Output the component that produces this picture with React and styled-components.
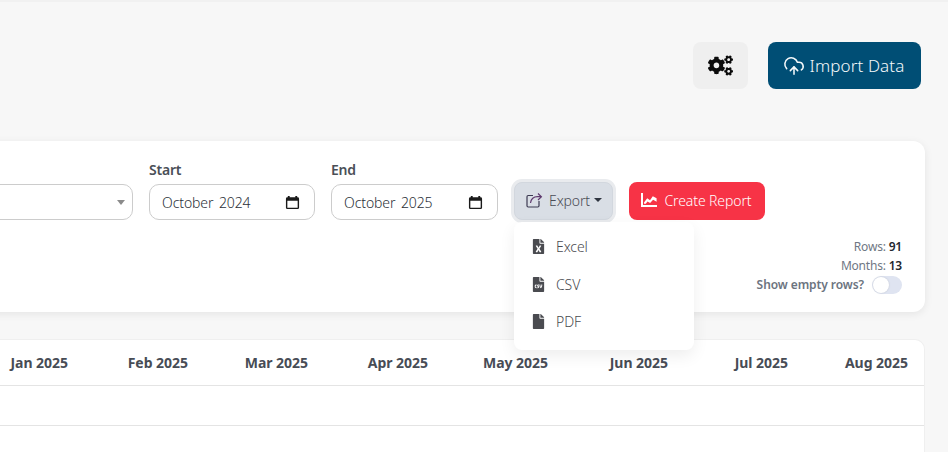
import React from "react";
import styled, { createGlobalStyle } from "styled-components";
import { FaCogs, FaFileExcel, FaFileCsv, FaFile } from "react-icons/fa";
import { CloudUpload } from "lucide-react";

const Global = createGlobalStyle`
  html, body { margin: 0; padding: 0; background: #f7f7f7; width: 948px; height: 452px; overflow: hidden; }
  * { box-sizing: border-box; }
  body { font-family: "Noto Sans", "Open Sans", sans-serif; }
`;

const Page = styled.div`
  width: 948px; height: 452px; overflow: hidden; background: #f7f7f7;
  border-top: 2px solid #f1f1f1;
  display: flex; flex-direction: column;
`;
const TopBar = styled.div`
  display: flex; justify-content: flex-end; gap: 20px;
  padding: 40px 27px 0 0;
`;
const SettingsButton = styled.button`
  width: 55px; height: 47px; border: 0; border-radius: 8px; background: #efefef;
  display: flex; align-items: center; justify-content: center; padding: 0; color: #0b0b0b;
  font-size: 25px;
`;
const ImportButton = styled.button`
  width: 153px; height: 47px; border: 0; border-radius: 8px; background: #004e75; color: #f4f8fa;
  display: flex; align-items: center; justify-content: center; gap: 5px; padding: 0 2px 0 0;
  font: 300 17px "Noto Sans", sans-serif; letter-spacing: 0.1px;
`;
const FilterCard = styled.div`
  margin: 52px 23px 0 -40px; height: 171px; flex: none;
  background: #fff; border-radius: 12px; box-shadow: 0 2px 8px rgba(0,0,0,.08);
  display: flex; flex-direction: column; padding: 19px 23px 0 20px;
`;
const Toolbar = styled.div`
  display: flex; align-items: flex-start; gap: 16px;
`;
const Field = styled.div`
  display: flex; flex-direction: column; gap: 4px; flex: none;
  width: ${p => p.$w}px;
`;
const Label = styled.label`
  font: 600 14px/20px "Noto Sans", sans-serif; color: #4a4f57; letter-spacing: -0.2px; height: 20px;
`;
const Control = styled.div`
  height: 36px; border: 1px solid #cccccc; border-radius: 10px; background: #fff;
  display: flex; align-items: center; justify-content: ${p => p.$end ? "flex-end" : "space-between"};
  padding: 0 14px 0 12px; font: 350 14px "Noto Sans", sans-serif; color: #2b3038;
  word-spacing: 2px; letter-spacing: -0.1px;
`;
const Caret = styled.span`
  width: 0; height: 0; border-left: 4.5px solid transparent; border-right: 4.5px solid transparent;
  border-top: 5px solid #8b8b8b; margin-right: -7px;
`;
const ExportWrap = styled.div`
  position: relative; margin-top: 22px; flex: none;
`;
const ExportButton = styled.button`
  width: 99px; height: 38px; border: 1px solid #d2d7de; border-radius: 8px; background: #d9dee5;
  box-shadow: 0 0 0 3px #e9ebee; color: #4a4c55; padding: 0 0 2px 0;
  display: flex; align-items: center; justify-content: center; gap: 6px;
  font: 350 14px "Noto Sans", sans-serif; letter-spacing: -0.15px;
`;
const DownCaret = styled.span`
  width: 0; height: 0; border-left: 4px solid transparent; border-right: 4px solid transparent;
  border-top: 4px solid #2f3540; margin-left: -2px;
`;
const Menu = styled.div`
  position: absolute; top: 40px; left: 0; width: 180px; height: 128px; z-index: 2;
  background: #fff; border-radius: 8px; box-shadow: 0 6px 16px rgba(0,0,0,.07);
  padding: 6px 0 0 17px; display: flex; flex-direction: column;
`;
const MenuItem = styled.div`
  height: 37.5px; display: flex; align-items: center; gap: 10px; color: #4a4b50;
  font: 350 14px "Noto Sans", sans-serif; letter-spacing: -0.1px;
`;
const ReportButton = styled.button`
  margin-top: 22px; width: 136px; height: 38px; border: 0; border-radius: 8px; background: #f73346; color: #fff;
  display: flex; align-items: center; justify-content: center; gap: 7px; padding: 0 1px 2px 0; flex: none;
  font: 300 14px "Noto Sans", sans-serif; letter-spacing: -0.1px;
`;
const Stats = styled.div`
  margin-top: 17px; align-self: flex-end; white-space: nowrap; display: flex; flex-direction: column; align-items: flex-end;
  font: 400 12px/19px "Noto Sans", sans-serif; color: #6f7784; letter-spacing: -0.2px;
  b { font-weight: 600; color: #23272e; }
`;
const ToggleRow = styled.div`
  display: flex; align-items: center; gap: 8px; font-weight: 600; color: #6c7480; letter-spacing: -0.08px;
`;
const Toggle = styled.span`
  width: 30px; height: 18px; border-radius: 9px; background: #dfe4f1; display: inline-flex; align-items: center;
  &::before { content: ""; width: 16px; height: 16px; margin-left: 1px; border-radius: 50%; background: #fff; box-shadow: 0 0 2px rgba(0,0,0,.15); }
`;
const TableCard = styled.div`
  margin: 27px 23px 0 -60px; flex: 1; background: #fff; border: 1px solid #efefef; border-bottom: 0; border-radius: 10px 10px 0 0;
`;
const HeadRow = styled.div`
  height: 46px; border-bottom: 1px solid #e4e4e4; display: flex; justify-content: flex-end; align-items: center;
  padding-right: 16px;
`;
const Month = styled.span`
  flex: none; width: 120px; text-align: right; white-space: nowrap;
  font: 700 14px/18px "Noto Sans", sans-serif; color: #474c55; letter-spacing: -0.03px;
`;
const BodyRow = styled.div`
  height: 40px; border-bottom: 1px solid #e4e4e4;
`;

const ShareIcon = () => (
  <svg width="18" height="18" viewBox="0 0 18 18" fill="none" strokeWidth="1.2">
    <path d="M8 4.500H3.200a1.200 1.200 0 0 0-1.200 1.200v9.100a1.200 1.200 0 0 0 1.200 1.200h9.600a1.200 1.200 0 0 0 1.200-1.200V10" stroke="#3c3a52" />
    <path d="M5.500 12c.6-4 3-6.300 7-6.300h3.600" stroke="#5f3a6e" />
    <path d="M13 2.500l3.400 3.200L13 9" stroke="#5f3a6e" />
  </svg>
);

const ChartIcon = () => (
  <svg width="16" height="14" viewBox="0 0 16 14" fill="#fff">
    <path d="M0 0h2v12h14v2H0z" />
    <path d="M3 9.500l3.200-4.300 2.800 2 2.800-4 3.800 2v3.500l-3.500-1.900-3 3.300-2.600-1.600-1.700 2.300H3z" />
  </svg>
);

const CalendarIcon = () => (
  <svg width="15" height="15" viewBox="0 0 16 16">
    <path fill="#1a1a1a" d="M3 1h2v1.500h6V1h2v1.500h.5A1.500 1.500 0 0 1 15 4v9.500a1.500 1.500 0 0 1-1.500 1.500h-11A1.500 1.500 0 0 1 1 13.500V4a1.500 1.500 0 0 1 1.500-1.500H3zM2.500 6v7.500h11V6z" />
  </svg>
);

const months = ["Jan 2025", "Feb 2025", "Mar 2025", "Apr 2025", "May 2025", "Jun 2025", "Jul 2025", "Aug 2025"];

export default function App() {
  return (
    <Page>
      <Global />
      <TopBar>
        <SettingsButton aria-label="Settings"><FaCogs /></SettingsButton>
        <ImportButton><CloudUpload size={22} strokeWidth={1.7} />Import Data</ImportButton>
      </TopBar>
      <FilterCard>
        <Toolbar>
          <Field $w={153}>
            <Label>&nbsp;</Label>
            <Control $end><Caret /></Control>
          </Field>
          <Field $w={166}>
            <Label>Start</Label>
            <Control>October 2024<CalendarIcon /></Control>
          </Field>
          <Field $w={167}>
            <Label>End</Label>
            <Control>October 2025<CalendarIcon /></Control>
          </Field>
          <ExportWrap>
            <ExportButton><ShareIcon />Export<DownCaret /></ExportButton>
            <Menu>
              <MenuItem><FaFileExcel size={15} />Excel</MenuItem>
              <MenuItem><FaFileCsv size={15} />CSV</MenuItem>
              <MenuItem><FaFile size={15} />PDF</MenuItem>
            </Menu>
          </ExportWrap>
          <ReportButton><ChartIcon />Create Report</ReportButton>
        </Toolbar>
        <Stats>
          <span>Rows: <b>91</b></span>
          <span>Months: <b>13</b></span>
          <ToggleRow>Show empty rows?<Toggle /></ToggleRow>
        </Stats>
      </FilterCard>
      <TableCard>
        <HeadRow>{months.map(t => <Month key={t}>{t}</Month>)}</HeadRow>
        <BodyRow />
      </TableCard>
    </Page>
  );
}
